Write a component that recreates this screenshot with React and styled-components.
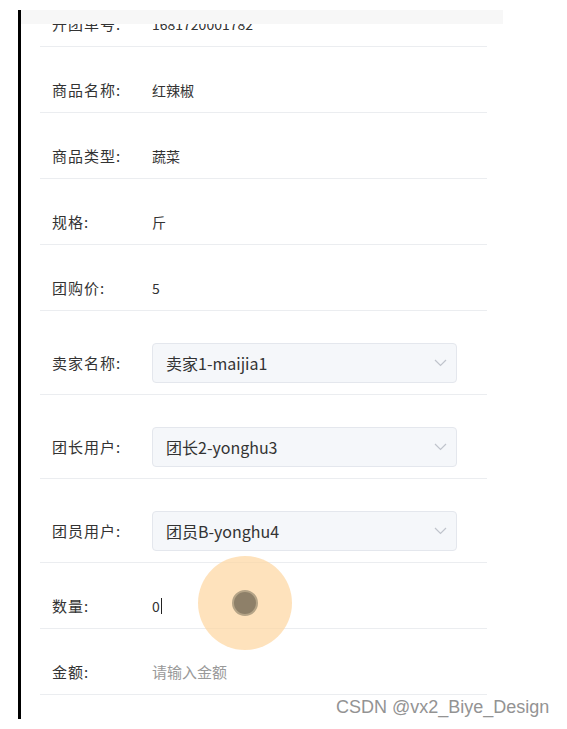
import styled, { createGlobalStyle } from "styled-components";

const GlobalStyle = createGlobalStyle`
  html, body {
    margin: 0;
    padding: 0;
    background: #ffffff;
  }
  body {
    font-family: "Noto Sans CJK SC", "Noto Sans", sans-serif;
    color: #333333;
  }
`;

const rows = [
  { label: "开团单号:", value: "1681720001782" },
  { label: "商品名称:", value: "红辣椒" },
  { label: "商品类型:", value: "蔬菜" },
  { label: "规格:", value: "斤" },
  { label: "团购价:", value: "5" },
  { label: "卖家名称:", select: "卖家1-maijia1" },
  { label: "团长用户:", select: "团长2-yonghu3" },
  { label: "团员用户:", select: "团员B-yonghu4" },
  { label: "数量:", input: "0" },
  { label: "金额:", placeholder: "请输入金额" },
];

const Chevron = () => (
  <svg width="13" height="8" viewBox="0 0 13 8" fill="none">
    <path d="M1 1l5.5 5.5L12 1" stroke="#c0c4cc" strokeWidth="1.2" />
  </svg>
);

const App = () => {
  return (
    <>
      <GlobalStyle />
      <Page>
        <Frame>
          <HeaderBar />
          <Viewport>
            <List>
              {rows.map((row) => (
                <Row key={row.label} tall={!!row.select}>
                  <Label>{row.label}</Label>
                  {row.select && (
                    <Select>
                      <span>{row.select}</span>
                      <Chevron />
                    </Select>
                  )}
                  {row.input && (
                    <Value>
                      {row.input}
                      <Caret />
                    </Value>
                  )}
                  {row.placeholder && <Placeholder>{row.placeholder}</Placeholder>}
                  {row.value && <Value>{row.value}</Value>}
                </Row>
              ))}
            </List>
          </Viewport>
          <TouchMark>
            <TouchDot />
          </TouchMark>
        </Frame>
        <Watermark>CSDN @vx2_Biye_Design</Watermark>
      </Page>
    </>
  );
};

const Page = styled.div`
  position: relative;
  width: 567px;
  height: 729px;
  padding: 10px 0 0 18px;
  box-sizing: border-box;
  overflow: hidden;
`;

const Frame = styled.div`
  position: relative;
  width: 485px;
  height: 709px;
  border-left: 3px solid #000000;
`;

const HeaderBar = styled.div`
  position: absolute;
  top: 0;
  left: 0;
  width: 482px;
  height: 14px;
  background: #f7f7f7;
  z-index: 2;
`;

const Viewport = styled.div`
  height: 100%;
  overflow: hidden;
`;

const List = styled.div`
  display: flex;
  flex-direction: column;
  margin: -29px 0 0 19px;
  width: 447px;
`;

const Row = styled.div`
  display: flex;
  align-items: center;
  height: ${(p) => (p.tall ? 84 : 66)}px;
  padding: 32px 0 12px 12px;
  box-sizing: border-box;
  border-bottom: 1px solid #ebedf0;
`;

const Label = styled.div`
  width: 100px;
  flex-shrink: 0;
  font-size: 15px;
  letter-spacing: 1px;
  color: #333333;
`;

const Value = styled.div`
  display: flex;
  align-items: center;
  font-size: 14px;
  color: #333333;
`;

const Placeholder = styled.div`
  font-size: 15px;
  color: #999999;
`;

const Caret = styled.span`
  display: inline-block;
  width: 1px;
  height: 16px;
  margin-left: 1px;
  background: #222222;
`;

const Select = styled.div`
  display: flex;
  align-items: center;
  justify-content: space-between;
  width: 305px;
  height: 40px;
  padding: 0 9px 0 13px;
  box-sizing: border-box;
  background: #f5f7fa;
  border: 1px solid #e4e7ed;
  border-radius: 4px;
  font-size: 16px;
  color: #333333;
`;

const TouchMark = styled.div`
  position: absolute;
  left: 177px;
  top: 546px;
  width: 94px;
  height: 94px;
  border-radius: 50%;
  background: rgba(253, 214, 160, 0.7);
  display: flex;
  align-items: center;
  justify-content: center;
  z-index: 3;
`;

const TouchDot = styled.div`
  width: 22px;
  height: 22px;
  border-radius: 50%;
  background: #8e8069;
  border: 2px solid #b5a487;
`;

const Watermark = styled.div`
  position: absolute;
  left: 336px;
  top: 697px;
  font-family: "Liberation Sans", "Noto Sans", sans-serif;
  font-size: 18px;
  color: #939393;
  z-index: 4;
`;

export default App;
